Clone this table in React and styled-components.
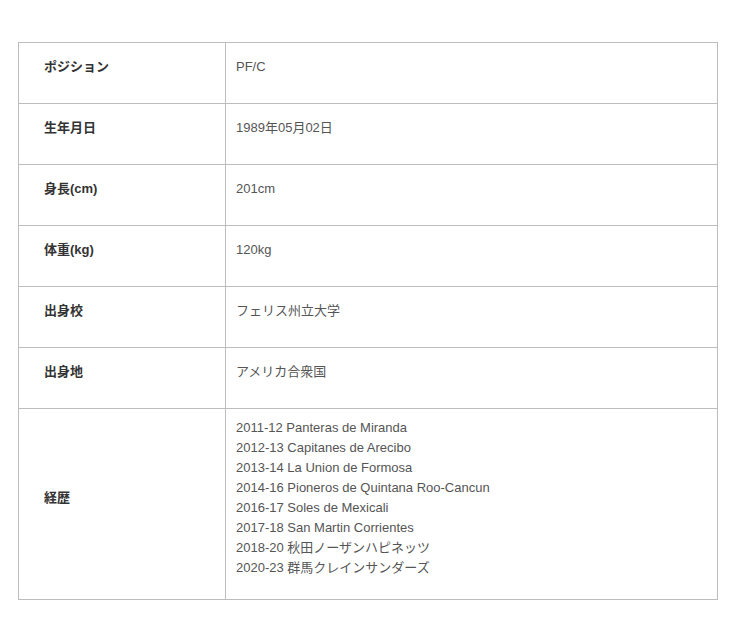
import React from "react";
import styled, { createGlobalStyle } from "styled-components";

const GlobalStyle = createGlobalStyle`
  body {
    margin: 0;
    background: #fff;
    font-family: "Liberation Sans", Arial, "Noto Sans CJK JP", sans-serif;
  }
`;

const Wrapper = styled.div`
  padding: 42px 0 0 18px;
`;

const Table = styled.div`
  width: 700px;
  box-sizing: border-box;
  border: 1px solid #bdbdbd;
  border-bottom: none;
`;

const Row = styled.div`
  display: grid;
  grid-template-columns: 207px 1fr;
  border-bottom: 1px solid #bdbdbd;
`;

const Cell = styled.div`
  display: flex;
  flex-direction: column;
  justify-content: center;
  box-sizing: border-box;
  min-height: 60px;
  padding: 9px 10px 21px;
  font-size: 13px;
  line-height: 20px;
`;

const Label = styled(Cell)`
  padding-left: 25px;
  border-right: 1px solid #bdbdbd;
  font-weight: bold;
  color: #333;
`;

const Value = styled(Cell)`
  color: #555;
`;

const rows = [
  ["ポジション", ["PF/C"]],
  ["生年月日", ["1989年05月02日"]],
  ["身長(cm)", ["201cm"]],
  ["体重(kg)", ["120kg"]],
  ["出身校", ["フェリス州立大学"]],
  ["出身地", ["アメリカ合衆国"]],
  [
    "経歴",
    [
      "2011-12 Panteras de Miranda",
      "2012-13 Capitanes de Arecibo",
      "2013-14 La Union de Formosa",
      "2014-16 Pioneros de Quintana Roo-Cancun",
      "2016-17 Soles de Mexicali",
      "2017-18 San Martin Corrientes",
      "2018-20 秋田ノーザンハピネッツ",
      "2020-23 群馬クレインサンダーズ",
    ],
  ],
];

export default function App() {
  return (
    <Wrapper>
      <GlobalStyle />
      <Table>
        {rows.map(([label, values]) => (
          <Row key={label}>
            <Label>{label}</Label>
            <Value>
              {values.map((v) => (
                <div key={v}>{v}</div>
              ))}
            </Value>
          </Row>
        ))}
      </Table>
    </Wrapper>
  );
}
